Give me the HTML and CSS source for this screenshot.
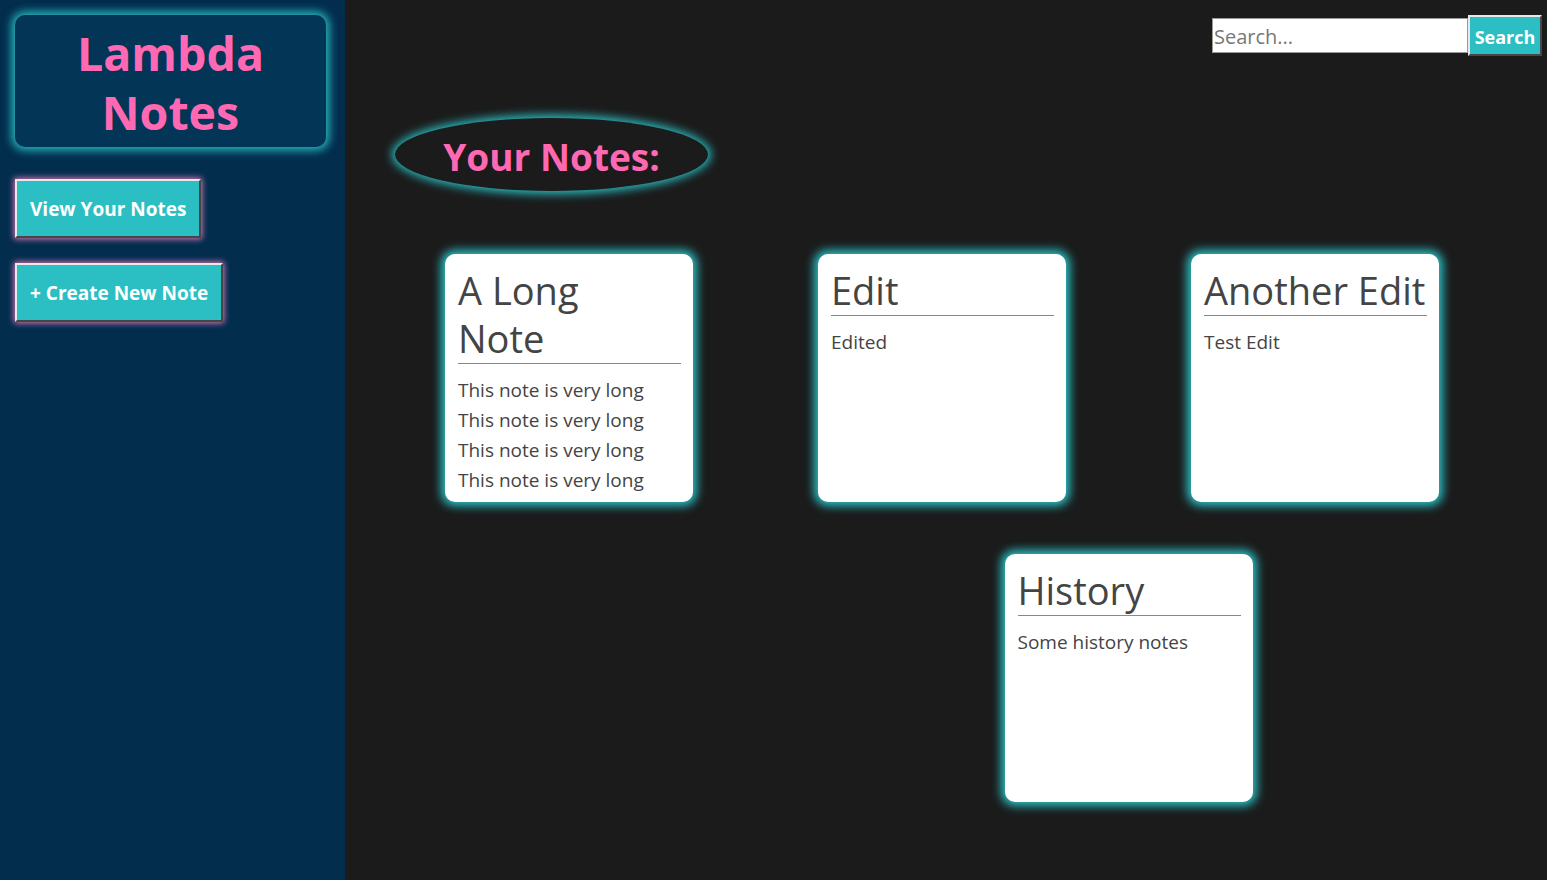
FILE: index.html
```html
<!DOCTYPE html>
<html lang="en">
<head>
<meta charset="utf-8">
<title>Lambda Notes</title>
<link rel="stylesheet" href="styles.css">
</head>
<body>
<div class="app">
  <aside class="sidebar">
    <div class="logo"><h1>Lambda<br>Notes</h1></div>
    <button class="nav-btn">View Your Notes</button>
    <button class="nav-btn">+ Create New Note</button>
  </aside>
  <main class="main">
    <div class="search">
      <input class="search-input" type="text" placeholder="Search...">
      <button class="search-btn">Search</button>
    </div>
    <h2 class="heading">Your Notes:</h2>
    <div class="notes">
      <div class="card">
        <h3 class="card-title">A Long<br>Note</h3>
        <p class="card-body">This note is very long This note is very long This note is very long This note is very long</p>
      </div>
      <div class="card">
        <h3 class="card-title">Edit</h3>
        <p class="card-body">Edited</p>
      </div>
      <div class="card">
        <h3 class="card-title">Another Edit</h3>
        <p class="card-body">Test Edit</p>
      </div>
      <div class="card card-last">
        <h3 class="card-title">History</h3>
        <p class="card-body">Some history notes</p>
      </div>
    </div>
  </main>
</div>
</body>
</html>
```
FILE: styles.css
```css
* { box-sizing: border-box; }
html, body { margin: 0; height: 100%; }
body {
  font-family: "Open Sans", "Noto Sans", sans-serif;
  background: #1b1b1b;
}
.app {
  display: flex;
  height: 100vh;
}
.sidebar {
  width: 345px;
  flex-shrink: 0;
  background: #022d4d;
  padding: 15px;
  display: flex;
  flex-direction: column;
  align-items: flex-start;
}
.logo {
  width: 311px;
  height: 132px;
  background: #033556;
  border-radius: 10px;
  box-shadow: 0 0 10px 3px #2bbfc4;
  display: flex;
  align-items: center;
  justify-content: center;
  padding-top: 4px;
}
.logo h1 {
  margin: 0;
  color: #ff69b4;
  font-size: 46.5px;
  line-height: 59px;
  font-weight: 700;
  text-align: center;
}
.nav-btn {
  margin-top: 32px;
  height: 59px;
  padding: 0 13px;
  background: #2bbfc4;
  border: 2px outset #e8e8e8;
  border-right-color: #9a9a9a;
  border-bottom-color: #9a9a9a;
  box-shadow: 0 0 6px 1px #e07ab8;
  color: #fff;
  font-family: inherit;
  font-weight: 700;
  font-size: 19px;
}
.nav-btn + .nav-btn { margin-top: 25px; }
.main {
  flex: 1;
  min-width: 0;
  background: #1b1b1b;
  display: flex;
  flex-direction: column;
}
.search {
  display: flex;
  justify-content: flex-end;
  align-items: center;
  padding: 15px 5px 0 0;
}
.search-input {
  width: 256px;
  height: 35px;
  border: 1px solid #9a9a9a;
  padding: 2px 1px 0;
  font-family: inherit;
  font-size: 20px;
  color: #333;
  background: #fff;
}
.search-input::placeholder { color: #777; }
.search-btn {
  height: 41px;
  width: 74px;
  padding: 2px 0 0;
  background: #2bbfc4;
  border: 2px outset #e8e8e8;
  border-right-color: #9a9a9a;
  border-bottom-color: #9a9a9a;
  color: #fff;
  font-family: inherit;
  font-weight: 700;
  font-size: 18px;
}
.heading {
  align-self: flex-start;
  margin: 62px 0 0 50px;
  width: 313px;
  height: 73px;
  border-radius: 50%;
  background: #1b1b1b;
  box-shadow: 0 0 10px 3px #2bbfc4;
  color: #ff69b4;
  font-size: 37px;
  font-weight: 700;
  display: flex;
  align-items: center;
  justify-content: center;
  padding-top: 4px;
}
.notes {
  margin: 63px 0 0 100px;
  display: grid;
  grid-template-columns: repeat(5, 186.5px) 62px;
  row-gap: 52px;
}
.card {
  grid-column: span 2;
  width: 248px;
  height: 248px;
  background: #fff;
  border-radius: 10px;
  box-shadow: 0 0 10px 4px #2bbfc4;
  padding: 12px 12px 0 13px;
  overflow: hidden;
  color: #444;
}
.card-last { grid-column: 4 / span 2; }
.card-title {
  margin: 0;
  font-size: 38px;
  font-weight: 400;
  line-height: 48px;
  border-bottom: 1px solid #888;
  padding-bottom: 1px;
}
.card-body {
  margin: 11px 0 0;
  font-size: 19px;
  line-height: 30px;
}
```
